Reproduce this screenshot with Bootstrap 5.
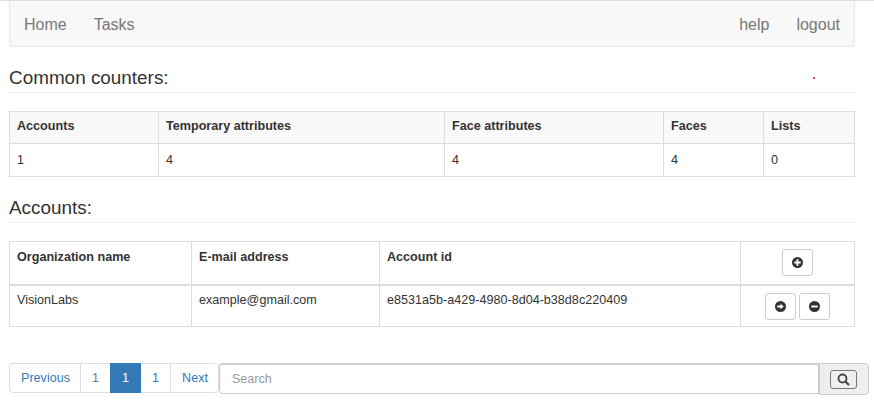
<!DOCTYPE html>
<html lang="en">
<head>
<meta charset="utf-8">
<title>Accounts</title>
<link href="https://cdn.jsdelivr.net/npm/bootstrap@5.3.0/dist/css/bootstrap.min.css" rel="stylesheet">
<style>
html,body{overflow:hidden}
body{font-family:"Liberation Sans",Arial,sans-serif;font-size:12.6px;line-height:20px;color:#333;background:#fff;border-top:1px solid #e0e0e0;position:relative}
.page-wrap{padding:0 19px 0 9px;width:874px}
.top-bar{height:46px;background:#f8f8f8;border:1px solid #e7e7e7;border-top:0;border-radius:0 0 4px 4px;padding:2px 14px 0;font-size:16px;margin-bottom:21px;width:846px}
.top-bar a{color:#777;text-decoration:none;line-height:22px}
.nav-links{gap:27px}
.head-line{font-size:18.9px;font-weight:400;line-height:20px;color:#333;margin:0 0 18px;padding-bottom:4px;border-bottom:1px solid #eee;width:846px}
.data-grid{table-layout:fixed;width:845px;margin:0;--bs-table-border-color:#ddd;--bs-table-color:#333;color:#333;font-size:12.6px}
.data-grid th,.data-grid td{padding:5px 7px 6px;vertical-align:top;line-height:20px;border-color:#ddd}
.data-grid th{font-weight:700}
.counter-head th{background:#f9f9f9;--bs-table-bg:#f9f9f9}
.data-grid.counter-grid th{padding:4px 7px 7px}
.counter-grid td{padding:6px 7px}
.table.counter-grid{margin-bottom:21px}
.table.acct-grid{margin-bottom:36px}
.acct-head th{border-bottom:2px solid #ddd;height:43px}
.acct-grid td{height:42px;padding-top:4px}
.data-grid .act-cell{padding:7px 0 0;text-align:center}
.tool-btn{width:31px;height:27px;padding:0;background:#fff;border:1px solid #ccc;border-radius:3px;display:inline-flex;align-items:center;justify-content:center;vertical-align:top}
.tool-btn+.tool-btn{margin-left:3px}
.tool-btn svg{display:block}
.c1{width:149px}.c2{width:286px}.c3{width:219px}.c4{width:100px}.c5{width:91px}
.a1{width:182px}.a2{width:188px}.a3{width:361px}.a4{width:114px}
.foot-row{width:860px}
.pager{margin:0;--bs-pagination-padding-x:11px;--bs-pagination-padding-y:4px;--bs-pagination-font-size:12.6px;--bs-pagination-color:#337ab7;--bs-pagination-border-color:#ddd;--bs-pagination-border-radius:4px;--bs-pagination-active-bg:#337ab7;--bs-pagination-active-border-color:#337ab7;flex:none}
.pager .page-link{line-height:20px;height:30px;white-space:nowrap}
.pager .page-item:first-child .page-link,.pager .page-item:last-child .page-link{padding-right:10px}
.pager .muted-num{color:#777}
.find-box{flex:1;min-width:0}
.find-box .form-control{flex:1;min-width:0;height:31px;border-radius:4px 0 0 4px;border:1px solid #ccc;border-top-width:2px;font-size:12.6px;padding:4px 12px;color:#555;box-shadow:none}
.find-box .form-control::placeholder{color:#999}
.find-add{flex:none;width:50px;height:32px;background:#eee;border:1px solid #ccc;border-radius:0 4px 4px 0;display:flex;align-items:center;justify-content:center;padding:0 2px 0 0}
.find-btn{width:27px;height:19px;background:#efefef;border:1px solid #767676;border-radius:3px;padding:0;display:flex;align-items:center;justify-content:center}
.red-dot{position:absolute;left:813px;top:76px;width:2px;height:2px;background:#e8000d;border-radius:50%}
</style>
</head>
<body>
<div class="page-wrap">
  <nav class="top-bar d-flex align-items-center justify-content-between">
    <div class="d-flex nav-links"><a href="#">Home</a><a href="#">Tasks</a></div>
    <div class="d-flex nav-links"><a href="#">help</a><a href="#">logout</a></div>
  </nav>

  <h4 class="head-line">Common counters:</h4>
  <table class="table table-bordered data-grid counter-grid">
    <colgroup><col class="c1"><col class="c2"><col class="c3"><col class="c4"><col class="c5"></colgroup>
    <thead class="counter-head"><tr><th>Accounts</th><th>Temporary attributes</th><th>Face attributes</th><th>Faces</th><th>Lists</th></tr></thead>
    <tbody><tr><td>1</td><td>4</td><td>4</td><td>4</td><td>0</td></tr></tbody>
  </table>

  <h4 class="head-line">Accounts:</h4>
  <table class="table table-bordered data-grid acct-grid">
    <colgroup><col class="a1"><col class="a2"><col class="a3"><col class="a4"></colgroup>
    <thead class="acct-head"><tr><th>Organization name</th><th>E-mail address</th><th>Account id</th>
      <th class="act-cell"><button class="tool-btn" type="button" aria-label="Add"><svg width="11" height="11" viewBox="0 0 12 12"><circle cx="6" cy="6" r="6" fill="#333"/><path d="M5 2.500h2V5h2.500v2H7v2.500H5V7H2.500V5H5z" fill="#fff"/></svg></button></th></tr></thead>
    <tbody><tr><td>VisionLabs</td><td>example@gmail.com</td><td>e8531a5b-a429-4980-8d04-b38d8c220409</td>
      <td class="act-cell"><button class="tool-btn" type="button" aria-label="Open"><svg width="11" height="11" viewBox="0 0 12 12"><circle cx="6" cy="6" r="6" fill="#333"/><path d="M2.500 5H6V3l3.500 3L6 9V7H2.500z" fill="#fff"/></svg></button><button class="tool-btn" type="button" aria-label="Remove"><svg width="11" height="11" viewBox="0 0 12 12"><circle cx="6" cy="6" r="6" fill="#333"/><rect x="2.500" y="5" width="7" height="2" fill="#fff"/></svg></button></td></tr></tbody>
  </table>

  <div class="foot-row d-flex align-items-start">
    <ul class="pagination pager">
      <li class="page-item"><a class="page-link" href="#">Previous</a></li>
      <li class="page-item"><a class="page-link muted-num" href="#">1</a></li>
      <li class="page-item active"><a class="page-link" href="#">1</a></li>
      <li class="page-item"><a class="page-link" href="#">1</a></li>
      <li class="page-item"><a class="page-link" href="#">Next</a></li>
    </ul>
    <div class="find-box d-flex align-items-start">
      <input class="form-control" type="text" placeholder="Search" aria-label="Search">
      <div class="find-add"><button class="find-btn" type="button" aria-label="Search"><svg width="13" height="13" viewBox="0 0 13 13"><circle cx="5.500" cy="5.500" r="4" fill="none" stroke="#444" stroke-width="1.800"/><path d="M8.500 8.500l3.500 3.500" stroke="#444" stroke-width="2.200" fill="none"/></svg></button></div>
    </div>
  </div>
</div>
<span class="red-dot"></span>
</body>
</html>
